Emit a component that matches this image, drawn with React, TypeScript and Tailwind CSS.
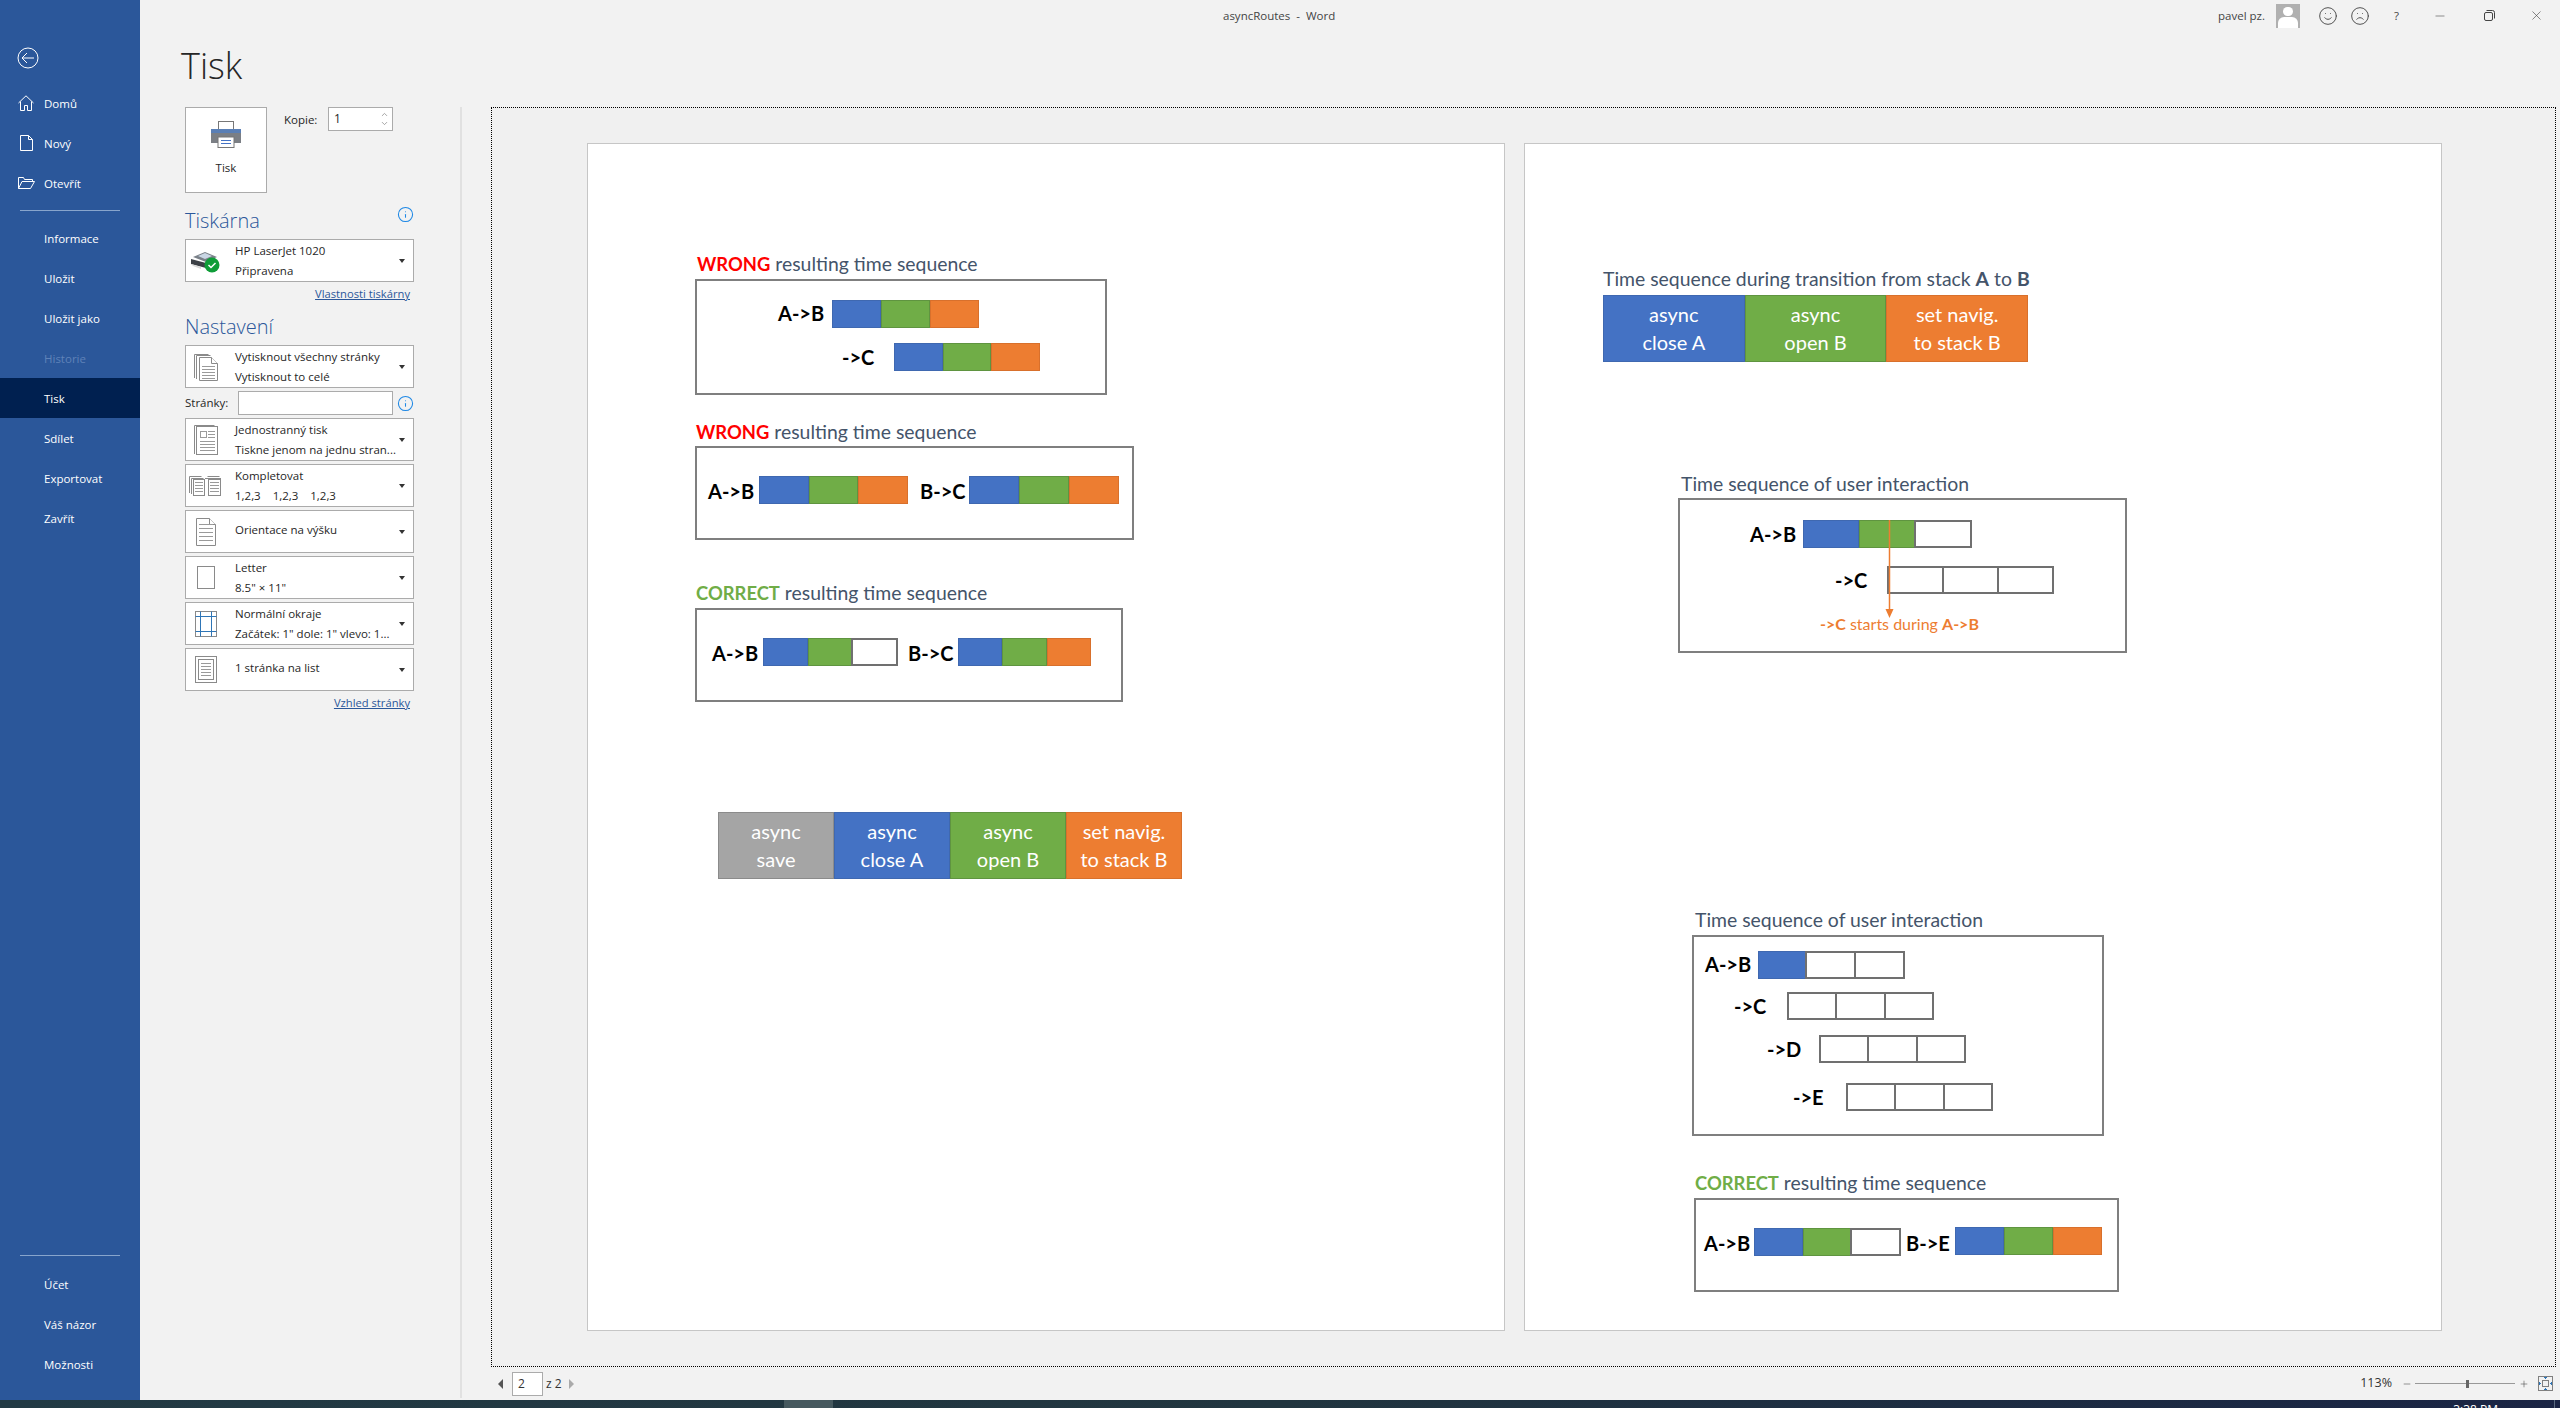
import { ChevronDown, ChevronUp, Frown, Info, Minus, Plus, Smile, X } from 'lucide-react'
import type { ReactNode } from 'react'

const segClass: Record<string, string> = {
  a: 'bg-[#a5a5a5] border-[#8b8b8b]',
  b: 'bg-[#4472c4] border-[#3f68b0]',
  g: 'bg-[#70ad47] border-[#5f9440]',
  o: 'bg-[#ed7d31] border-[#d8702c]',
  w: 'bg-white border-[#707070] border-2',
}

function Bar({ segs, className, labels }: { segs: string; className: string; labels?: string[][] }) {
  return (
    <div className={`absolute flex ${className}`}>
      {segs.split('').map((s, i) => (
        <div
          key={i}
          className={`flex-1 border pb-[2px] flex flex-col items-center justify-center text-white text-[20px] leading-[28px] ${segClass[s]} ${s === 'w' && i > 0 ? '-ml-[2px]' : ''}`}
        >
          {labels?.[i].map((l) => <span key={l}>{l}</span>)}
        </div>
      ))}
    </div>
  )
}

function Box({ className }: { className: string }) {
  return <div className={`absolute border-2 border-[#7f7f7f] ${className}`} />
}

function Label({ text, className }: { text: string; className: string }) {
  return <div className={`absolute h-6 leading-6 font-bold text-[20px] text-black whitespace-nowrap ${className}`}>{text}</div>
}

function Heading({ className, children }: { className: string; children: ReactNode }) {
  return <div className={`absolute h-6 leading-6 text-[19.4px] text-[#44546a] whitespace-nowrap ${className}`}>{children}</div>
}

function NavItem({ label, icon, dim, active }: { label: string; icon?: ReactNode; dim?: boolean; active?: boolean }) {
  return (
    <div
      className={`h-10 flex items-center text-[11.5px] ${active ? 'bg-[#002050]' : ''} ${dim ? 'text-[#5f82b8]' : 'text-white'}`}
    >
      <div className="w-[44px] shrink-0 flex justify-center pl-[12px] pr-[4px]">{icon}</div>
      <span className="pt-[1px]">{label}</span>
    </div>
  )
}

function DocLines({ x1, x2, ys, color = '#9a9a9a' }: { x1: number; x2: number; ys: number[]; color?: string }) {
  return (
    <>
      {ys.map((y) => (
        <line key={y} x1={x1} x2={x2} y1={y} y2={y} stroke={color} />
      ))}
    </>
  )
}

const ic = { fill: 'white', stroke: '#8a8a8a' }

function StackIcon() {
  return (
    <svg width="26" height="30" viewBox="0 0 26 30">
      <path d="M1.5 26V2.5h14" fill="none" stroke="#8a8a8a" />
      <path d="M3.5 27V3.5h14" fill="none" stroke="#8a8a8a" />
      <path d="M6.5 28.5V5.5h12l6 6v17z" {...ic} />
      <path d="M18.5 5.5v6h6" {...ic} />
      <DocLines x1={9} x2={22} ys={[14.5, 17.5, 20.5, 23.5, 26.5]} />
    </svg>
  )
}

function OneSideIcon() {
  return (
    <svg width="26" height="32" viewBox="0 0 26 32">
      <path d="M1.5 30V1.5h20" fill="none" stroke="#8a8a8a" />
      <rect x="3.5" y="2.5" width="21" height="28" {...ic} />
      <rect x="7.5" y="7.5" width="6" height="6" fill="white" stroke="#9a9a9a" />
      <DocLines x1={15} x2={22} ys={[7.5, 10.5, 13.5]} />
      <DocLines x1={7} x2={22} ys={[17.5, 20.5, 23.5, 26.5]} />
    </svg>
  )
}

function CollateIcon() {
  return (
    <svg width="34" height="22" viewBox="0 0 34 22">
      <path d="M.5 18V1.5h12M2.5 19V3.5h12M18.5 1.5h12M16 3.5h16" fill="none" stroke="#8a8a8a" />
      <rect x="4.5" y="4.5" width="11" height="16" {...ic} />
      <rect x="19.5" y="4.5" width="12" height="16" {...ic} />
      <DocLines x1={6} x2={14} ys={[7.5, 10.5, 13.5, 16.5]} />
      <DocLines x1={21} x2={30} ys={[7.5, 10.5, 13.5, 16.5]} />
    </svg>
  )
}

function PortraitIcon() {
  return (
    <svg width="22" height="30" viewBox="0 0 22 30">
      <path d="M1.5 28.5V1.5h13l6 6v21z" {...ic} />
      <path d="M14.5 1.5v6h6" {...ic} />
      <DocLines x1={4} x2={18} ys={[7.5, 11.5, 15.5, 19.5, 23.5]} />
    </svg>
  )
}

function MarginsIcon() {
  return (
    <svg width="24" height="28" viewBox="0 0 24 28">
      <rect x="1.5" y="1.5" width="21" height="25" fill="white" stroke="#8a8a8a" />
      <path d="M6.5 1.5v25M17.5 1.5v25M1.5 6.5h21M1.5 21.5h21" stroke="#2e75b6" fill="none" />
    </svg>
  )
}

function PerSheetIcon() {
  return (
    <svg width="24" height="29" viewBox="0 0 24 29">
      <rect x="1.5" y="1.5" width="21" height="26" {...ic} />
      <rect x="4.5" y="4.5" width="15" height="20" {...ic} />
      <DocLines x1={7} x2={17} ys={[8.5, 11.5, 14.5, 17.5, 20.5]} />
    </svg>
  )
}

function Dropdown({ icon, line1, line2 }: { icon: ReactNode; line1: string; line2?: string }) {
  return (
    <div className="h-[43px] bg-white border border-[#ababab] flex items-center">
      <div className="w-[39px] mr-[10px] shrink-0 flex justify-center">{icon}</div>
      <div className={`flex-1 min-w-0 text-[11.5px] leading-[20px] text-[#262626] whitespace-pre ${line2 ? '' : 'pb-[3px]'}`}>
        <div>{line1}</div>
        {line2 && <div>{line2}</div>}
      </div>
      <div className="w-[22px] shrink-0 flex justify-center">
        <div className="border-x-[3.5px] border-t-[4px] border-x-transparent border-t-[#333333]" />
      </div>
    </div>
  )
}

function LeftColumn() {
  return (
    <div className="w-[320px] shrink-0 pl-[45px] pr-[46px]">
      <div className="h-[40px] mt-[16px] mb-[21px] -ml-[4px] text-[36px] leading-[40px] font-light text-[#262626]">Tisk</div>
      <div className="flex items-start">
        <div className="w-[82px] h-[86px] bg-white border border-[#ababab] flex flex-col items-center pt-[13px] text-[11.5px] text-[#262626]">
          <svg width="30" height="27" viewBox="0 0 30 27">
            <rect x="7.5" y="0.5" width="15" height="9" fill="white" stroke="#777777" />
            <path d="M0 12a3 3 0 0 1 3-3h24a3 3 0 0 1 3 3v10H0z" fill="#7b7f85" />
            <rect x="0" y="8" width="30" height="4" fill="#5a7fb5" />
            <rect x="7" y="16" width="16" height="10.5" fill="white" stroke="#777777" />
            <path d="M10 19.5h10M10 22.5h10" stroke="#4472c4" />
          </svg>
          <div className="mt-[11px]">Tisk</div>
        </div>
        <div className="ml-[17px] h-6 pt-[1px] leading-6 text-[11.5px] text-[#262626] w-[44px]">Kopie:</div>
        <div className="w-[65px] h-6 bg-white border border-[#ababab] flex items-center justify-between pl-[5px] pr-[3px] text-[12px] text-[#262626]">
          1
          <div className="flex flex-col text-[#8a8a8a]">
            <ChevronUp size={9} />
            <ChevronDown size={9} />
          </div>
        </div>
      </div>
      <div className="mt-[14px] mb-[4px] h-7 flex justify-between items-start">
        <div className="text-[20px] leading-7 font-light text-[#2b579a]">Tiskárna</div>
        <Info size={17} strokeWidth={1.5} className="text-[#1e88e5] -mt-[1px]" />
      </div>
      <Dropdown
        icon={
          <svg width="32" height="24" viewBox="0 0 32 24">
            <path d="M3 8l12-5 12 5-11 5z" fill="#7a8088" />
            <path d="M8 7l7-3 7 3-7 3z" fill="#c9d6e4" />
            <path d="M1 10l15 4v5L1 15z" fill="#3c4046" />
            <path d="M1 15l10 3v2L3 17z" fill="#d8d8d8" />
            <circle cx="22" cy="16" r="7.5" fill="#0f9d38" />
            <path d="M18.5 16l2.5 2.5 4.5-4.5" fill="none" stroke="white" strokeWidth="1.5" />
          </svg>
        }
        line1="HP LaserJet 1020"
        line2="Připravena"
      />
      <div className="mt-[2px] h-5 leading-5 text-right pr-[4px] text-[11.2px] underline text-[#2b579a]">Vlastnosti tiskárny</div>
      <div className="mt-[9px] mb-[4px] h-7 text-[20px] leading-7 font-light text-[#2b579a]">Nastavení</div>
      <Dropdown icon={<StackIcon />} line1="Vytisknout všechny stránky" line2="Vytisknout to celé" />
      <div className="mt-[3px] h-6 flex items-center text-[11.5px] text-[#262626]">
        <div className="w-[53px]">Stránky:</div>
        <div className="w-[155px] h-6 bg-white border border-[#ababab]" />
        <Info size={17} strokeWidth={1.5} className="ml-[4px] text-[#1e88e5]" />
      </div>
      <div className="mt-[3px] flex flex-col gap-[3px]">
        <Dropdown icon={<OneSideIcon />} line1="Jednostranný tisk" line2="Tiskne jenom na jednu stran..." />
        <Dropdown icon={<CollateIcon />} line1="Kompletovat" line2="1,2,3    1,2,3    1,2,3" />
        <Dropdown icon={<PortraitIcon />} line1="Orientace na výšku" />
        <Dropdown icon={<div className="w-[18px] h-[23px] bg-white border border-[#8a8a8a]" />} line1="Letter" line2={'8.5" × 11"'} />
        <Dropdown icon={<MarginsIcon />} line1="Normální okraje" line2={'Začátek: 1" dole: 1" vlevo: 1...'} />
        <Dropdown icon={<PerSheetIcon />} line1="1 stránka na list" />
      </div>
      <div className="mt-[2px] h-5 leading-5 text-right pr-[4px] text-[11.2px] underline text-[#2b579a]">Vzhled stránky</div>
    </div>
  )
}

function PageOne() {
  return (
    <div className="relative w-[918px] h-[1188px] bg-white border border-[#c6c6c6] font-['Lato',sans-serif]">
      <Heading className="left-[109px] top-[108px]"><b className="text-[18.4px] text-[#ff0000]">WRONG</b> resulting time sequence</Heading>
      <Box className="left-[107px] top-[135px] w-[412px] h-[116px]" />
      <Label text="A->B" className="left-[190px] top-[157px]" />
      <Bar segs="bgo" className="left-[244px] top-[156px] w-[147px] h-[28px]" />
      <Label text="->C" className="left-[254px] top-[201px]" />
      <Bar segs="bgo" className="left-[306px] top-[199px] w-[146px] h-[28px]" />

      <Heading className="left-[108px] top-[276px]"><b className="text-[18.4px] text-[#ff0000]">WRONG</b> resulting time sequence</Heading>
      <Box className="left-[107px] top-[302px] w-[439px] h-[94px]" />
      <Label text="A->B" className="left-[120px] top-[335px]" />
      <Bar segs="bgo" className="left-[171px] top-[332px] w-[149px] h-[28px]" />
      <Label text="B->C" className="left-[332px] top-[335px]" />
      <Bar segs="bgo" className="left-[381px] top-[332px] w-[150px] h-[28px]" />

      <Heading className="left-[108px] top-[437px]"><b className="text-[18.4px] text-[#70ad47]">CORRECT</b> resulting time sequence</Heading>
      <Box className="left-[107px] top-[464px] w-[428px] h-[94px]" />
      <Label text="A->B" className="left-[124px] top-[497px]" />
      <Bar segs="bgw" className="left-[175px] top-[494px] w-[135px] h-[28px]" />
      <Label text="B->C" className="left-[320px] top-[497px]" />
      <Bar segs="bgo" className="left-[370px] top-[494px] w-[133px] h-[28px]" />

      <Bar
        segs="abgo"
        className="left-[130px] top-[668px] w-[464px] h-[67px]"
        labels={[['async', 'save'], ['async', 'close A'], ['async', 'open B'], ['set navig.', 'to stack B']]}
      />
    </div>
  )
}

function PageTwo() {
  return (
    <div className="relative w-[918px] h-[1188px] bg-white border border-[#c6c6c6] font-['Lato',sans-serif]">
      <Heading className="left-[78px] top-[123px]">Time sequence during transition from stack <b>A</b> to <b>B</b></Heading>
      <Bar
        segs="bgo"
        className="left-[78px] top-[151px] w-[425px] h-[67px]"
        labels={[['async', 'close A'], ['async', 'open B'], ['set navig.', 'to stack B']]}
      />

      <Heading className="left-[156px] top-[328px]">Time sequence of user interaction</Heading>
      <Box className="left-[153px] top-[354px] w-[449px] h-[155px]" />
      <Label text="A->B" className="left-[225px] top-[378px]" />
      <Bar segs="bgw" className="left-[278px] top-[376px] w-[169px] h-[28px]" />
      <Label text="->C" className="left-[310px] top-[424px]" />
      <Bar segs="www" className="left-[362px] top-[422px] w-[167px] h-[28px]" />
      <svg className="absolute left-[360px] top-[376px]" width="9" height="98" viewBox="0 0 9 98">
        <path d="M4.5 0v90" stroke="#ed7d31" strokeWidth="1.5" />
        <path d="M.5 89h8l-4 9z" fill="#ed7d31" />
      </svg>
      <div className="absolute left-[295px] top-[468px] h-6 leading-6 text-[16px] text-[#ed7d31] whitespace-nowrap">
        <b>-&gt;C</b> starts during <b>A-&gt;B</b>
      </div>

      <Heading className="left-[170px] top-[764px]">Time sequence of user interaction</Heading>
      <Box className="left-[167px] top-[791px] w-[412px] h-[201px]" />
      <Label text="A->B" className="left-[180px] top-[808px]" />
      <Bar segs="bww" className="left-[233px] top-[807px] w-[147px] h-[28px]" />
      <Label text="->C" className="left-[209px] top-[850px]" />
      <Bar segs="www" className="left-[262px] top-[848px] w-[147px] h-[28px]" />
      <Label text="->D" className="left-[242px] top-[893px]" />
      <Bar segs="www" className="left-[294px] top-[891px] w-[147px] h-[28px]" />
      <Label text="->E" className="left-[268px] top-[941px]" />
      <Bar segs="www" className="left-[321px] top-[939px] w-[147px] h-[28px]" />

      <Heading className="left-[170px] top-[1027px]"><b className="text-[18.4px] text-[#70ad47]">CORRECT</b> resulting time sequence</Heading>
      <Box className="left-[169px] top-[1054px] w-[425px] h-[94px]" />
      <Label text="A->B" className="left-[179px] top-[1087px]" />
      <Bar segs="bgw" className="left-[229px] top-[1084px] w-[147px] h-[28px]" />
      <Label text="B->E" className="left-[381px] top-[1087px]" />
      <Bar segs="bgo" className="left-[430px] top-[1083px] w-[147px] h-[28px]" />
    </div>
  )
}

export default function App() {
  return (
    <div className="w-[2560px] h-[1408px] flex flex-col overflow-hidden bg-[#f2f2f2] font-['Open_Sans',sans-serif]">
      <div className="h-[1400px] flex shrink-0">
        {/* backstage nav */}
        <aside className="w-[140px] shrink-0 bg-[#2b579a] flex flex-col">
          <div className="h-[40px] mt-[38px] mb-[5px] flex items-center pl-[17px]">
            <svg width="22" height="22" viewBox="0 0 22 22" fill="none" stroke="white">
              <circle cx="11" cy="11" r="10" />
              <path d="M17 11H5M10 6l-5 5 5 5" />
            </svg>
          </div>
          <NavItem
            label="Domů"
            icon={
              <svg width="16" height="16" viewBox="0 0 16 16" fill="none" stroke="white">
                <path d="M.5 8L8 .8 15.5 8M2.5 6.5v9h4v-5h3v5h4v-9" />
              </svg>
            }
          />
          <NavItem
            label="Nový"
            icon={
              <svg width="13" height="16" viewBox="0 0 13 16" fill="none" stroke="white">
                <path d="M.5.5h8l4 4v11H.5zM8.5.5v4h4" />
              </svg>
            }
          />
          <NavItem
            label="Otevřít"
            icon={
              <svg width="17" height="12" viewBox="0 0 17 12" fill="none" stroke="white">
                <path d="M.5 11.5V.5h5l1 2h8v2M.5 11.5h12l4-7H4z" />
              </svg>
            }
          />
          <div className="mt-[7px] mb-[7px] mx-5 h-px bg-[#88a5cc]" />
          <NavItem label="Informace" />
          <NavItem label="Uložit" />
          <NavItem label="Uložit jako" />
          <NavItem label="Historie" dim />
          <NavItem label="Tisk" active />
          <NavItem label="Sdílet" />
          <NavItem label="Exportovat" />
          <NavItem label="Zavřít" />
          <div className="mt-auto mb-[8px] mx-5 h-px bg-[#88a5cc]" />
          <div className="pb-[16px]">
            <NavItem label="Účet" />
            <NavItem label="Váš názor" />
            <NavItem label="Možnosti" />
          </div>
        </aside>

        <div className="flex-1 min-w-0 flex flex-col">
          {/* title bar */}
          <div className="h-[30px] shrink-0 pt-[1px] flex items-center text-[11.5px] text-[#444444]">
            <div className="ml-[1083px]">asyncRoutes&nbsp; -&nbsp; Word</div>
            <div className="ml-auto">pavel pz.</div>
            <div className="ml-[11px] w-6 h-6 bg-[#b0b0b0] overflow-hidden flex flex-col items-center">
              <div className="mt-[3px] w-[10px] h-[10px] rounded-full bg-white" />
              <div className="mt-[1px] w-[20px] h-[12px] rounded-t-md bg-white" />
            </div>
            <Smile size={20} strokeWidth={1.1} className="ml-[18px]" />
            <Frown size={20} strokeWidth={1.1} className="ml-[12px]" />
            <div className="ml-[24px] w-[8px]">?</div>
            <Minus size={14} strokeWidth={1} className="ml-[31px]" />
            <svg width="11" height="11" viewBox="0 0 11 11" fill="none" stroke="#444444" className="ml-[37px]">
              <rect x="0.5" y="2.5" width="8" height="8" rx="1.5" />
              <path d="M2.5.5h6a2 2 0 0 1 2 2v6" />
            </svg>
            <X size={15} strokeWidth={1} className="ml-[34px] mr-[16px]" />
          </div>

          <div className="flex-1 min-h-0 flex">
            <LeftColumn />
            <div className="w-[2px] mt-[77px] mb-[2px] bg-[#e1e1e1]" />
            <div className="flex-1 min-w-0 ml-[29px] mr-[4px] pt-[77px] flex flex-col">
              <div className="h-[1260px] bg-[#f0f0f0] border border-dotted border-black pl-[95px] pt-[35px] flex gap-[19px]">
                <PageOne />
                <PageTwo />
              </div>
              {/* page nav + zoom */}
              <div className="flex-1 flex items-center text-[12px] text-[#333333]">
                <div className="ml-[7px] border-y-[5px] border-r-[5px] border-y-transparent border-r-[#555555]" />
                <div className="ml-[9px] w-[31px] h-6 bg-white border border-[#ababab] pl-[5px] leading-[22px]">2</div>
                <div className="ml-[3px] w-[23px]">z 2</div>
                <div className="border-y-[5px] border-l-[5px] border-y-transparent border-l-[#aaaaaa]" />
                <div className="ml-auto text-[12.5px]">113%</div>
                <Minus size={10} strokeWidth={1.2} className="ml-[10px]" />
                <div className="ml-[3px] w-[100px] h-px bg-[#999999] flex items-center">
                  <div className="ml-[51px] w-[3px] h-[8px] bg-[#666666]" />
                </div>
                <Plus size={10} strokeWidth={1.2} className="ml-[4px]" />
                <svg width="15" height="15" viewBox="0 0 15 15" fill="none" className="ml-[9px] mr-[3px]">
                  <rect x="0.5" y="0.5" width="14" height="14" stroke="#808080" />
                  <rect x="4.5" y="4.5" width="6" height="6" stroke="#808080" />
                  <path d="M7.5 1v2M6 1.5h3M7.5 12v2M6 13.5h3M1 7.5h2M1.5 6v3M12 7.5h2M13.5 6v3" stroke="#2e75b6" />
                </svg>
              </div>
            </div>
          </div>
        </div>
      </div>

      {/* taskbar, cut off by the window edge */}
      <div className="h-2 shrink-0 flex overflow-hidden bg-linear-to-r from-[#223a44] via-[#21353f] to-[#1a2444] text-white text-[12px]">
        <div className="ml-[784px] w-[49px] bg-[#46595f]" />
        <div className="ml-auto mr-[56px] pt-[2px] leading-4">3:38 PM</div>
        <div className="w-px bg-[#5a6a80] mr-[5px]" />
      </div>
    </div>
  )
}
